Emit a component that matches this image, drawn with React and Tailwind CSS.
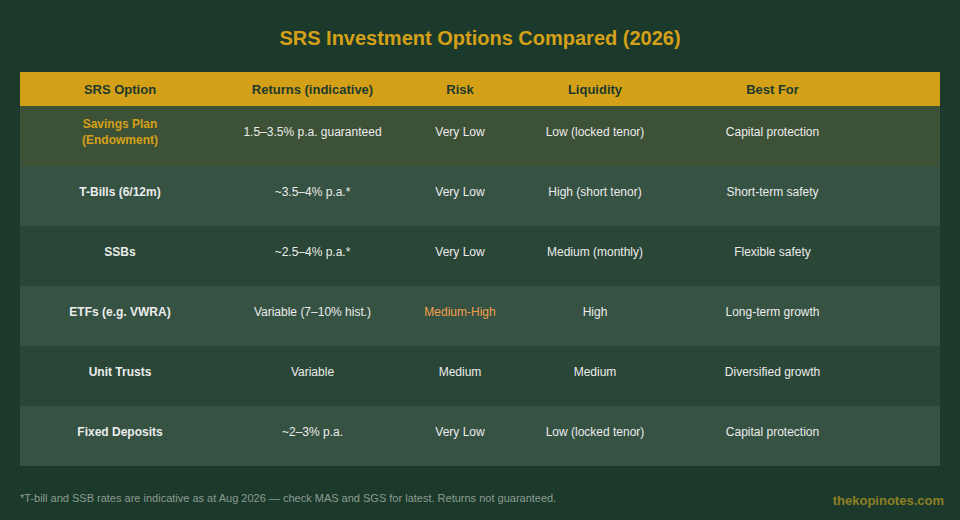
import React from "react";

const rows = [
  { opt: "Savings Plan\n(Endowment)", ret: "1.5–3.5% p.a. guaranteed", risk: "Very Low", liq: "Low (locked tenor)", best: "Capital protection", bg: "bg-[#3d5137]", gold: true },
  { opt: "T-Bills (6/12m)", ret: "~3.5–4% p.a.*", risk: "Very Low", liq: "High (short tenor)", best: "Short-term safety", bg: "bg-[#355243]" },
  { opt: "SSBs", ret: "~2.5–4% p.a.*", risk: "Very Low", liq: "Medium (monthly)", best: "Flexible safety", bg: "bg-[#2a4637]" },
  { opt: "ETFs (e.g. VWRA)", ret: "Variable (7–10% hist.)", risk: "Medium-High", liq: "High", best: "Long-term growth", bg: "bg-[#355243]", orange: true },
  { opt: "Unit Trusts", ret: "Variable", risk: "Medium", liq: "Medium", best: "Diversified growth", bg: "bg-[#2a4637]" },
  { opt: "Fixed Deposits", ret: "~2–3% p.a.", risk: "Very Low", liq: "Low (locked tenor)", best: "Capital protection", bg: "bg-[#355243]" },
];

const cols = "grid grid-cols-[200px_185px_110px_160px_195px_1fr]";

export default function App() {
  return (
    <div className="w-[960px] h-[520px] bg-[#1c3a2c] flex flex-col font-['Liberation_Sans',Arial,sans-serif] overflow-hidden">
      <h1 className="text-center text-[20px] leading-[24px] font-bold text-[#d4a017] pt-[26px] h-[72px]">
        SRS Investment Options Compared (2026)
      </h1>
      <div className="mx-[20px]">
        <div className={`${cols} h-[34px] pt-[1px] bg-[#d4a017] items-center text-[13px] font-bold text-[#1c3a2c] text-center`}>
          <div>SRS Option</div>
          <div>Returns (indicative)</div>
          <div>Risk</div>
          <div>Liquidity</div>
          <div>Best For</div>
          <div></div>
        </div>
        {rows.map((r, i) => (
          <div key={i} className={`${cols} h-[60px] pb-[8px] items-center text-center text-[12px] leading-[16px] text-[#ececec] ${r.bg}`}>
            <div className={`font-bold whitespace-pre-line ${r.gold ? "text-[#d4a017]" : "text-[#ececec]"}`}>{r.opt}</div>
            <div>{r.ret}</div>
            <div className={r.orange ? "text-[#f0a04b]" : ""}>{r.risk}</div>
            <div>{r.liq}</div>
            <div>{r.best}</div>
            <div></div>
          </div>
        ))}
      </div>
      <div className="flex justify-between items-center pl-[20px] pr-[16px] mt-[25px]">
        <span className="text-[11px] text-[#8d9b91] mt-[-6px]">
          *T-bill and SSB rates are indicative as at Aug 2026 — check MAS and SGS for latest. Returns not guaranteed.
        </span>
        <span className="text-[13px] font-bold text-[#8f7f23]">thekopinotes.com</span>
      </div>
    </div>
  );
}
